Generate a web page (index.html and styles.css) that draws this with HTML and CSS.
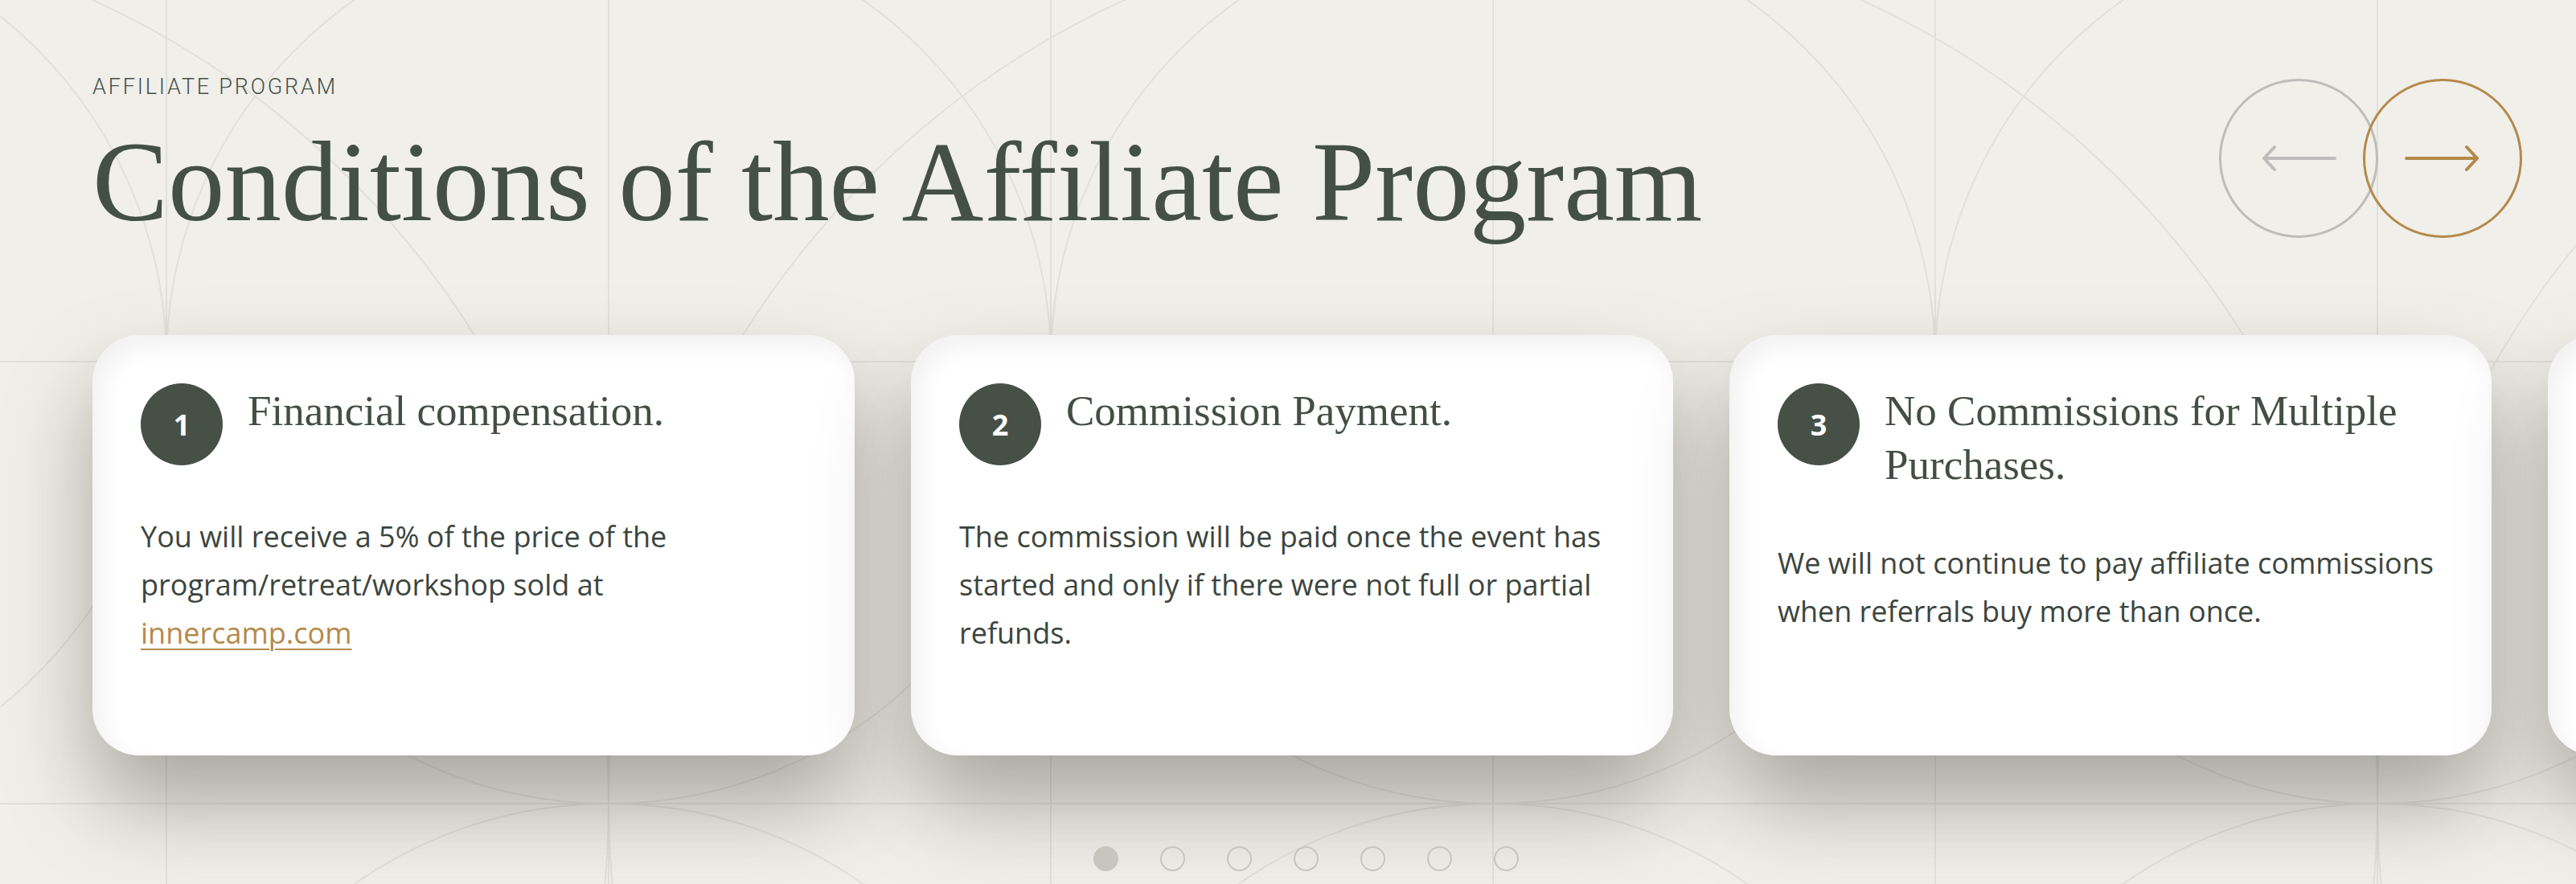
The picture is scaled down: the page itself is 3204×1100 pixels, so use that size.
FILE: index.html
```html
<!DOCTYPE html>
<html lang="en">
<head>
<meta charset="utf-8">
<title>Conditions of the Affiliate Program</title>
<link rel="stylesheet" href="styles.css">
</head>
<body>
<div class="page">
  <svg class="bg" width="3204" height="1100" viewBox="0 0 3204 1100" aria-hidden="true">
    <g class="bg-lines">
      <line x1="207" y1="0" x2="207" y2="1100"/>
      <line x1="757" y1="0" x2="757" y2="1100"/>
      <line x1="1307" y1="0" x2="1307" y2="1100"/>
      <line x1="1857" y1="0" x2="1857" y2="1100"/>
      <line x1="2407" y1="0" x2="2407" y2="1100"/>
      <line x1="2957" y1="0" x2="2957" y2="1100"/>
      <line x1="0" y1="450" x2="3204" y2="450"/>
      <line x1="0" y1="1000" x2="3204" y2="1000"/>
      <circle cx="-343" cy="450" r="550"/>
      <circle cx="757" cy="450" r="550"/>
      <circle cx="1857" cy="450" r="550"/>
      <circle cx="2957" cy="450" r="550"/>
      <circle cx="-343" cy="1550" r="550"/>
      <circle cx="757" cy="1550" r="550"/>
      <circle cx="1857" cy="1550" r="550"/>
      <circle cx="2957" cy="1550" r="550"/>
      <circle cx="-343" cy="1000" r="1100"/>
      <circle cx="1857" cy="1000" r="1100"/>
      <circle cx="4057" cy="1000" r="1100"/>
    </g>
  </svg>

  <header class="top">
    <div class="titles">
      <p class="eyebrow">AFFILIATE PROGRAM</p>
      <h1 class="heading">Conditions of the Affiliate Program</h1>
    </div>
    <div class="nav">
      <button class="nav-btn prev" aria-label="Previous">
        <svg width="96" height="36" viewBox="0 0 96 36"><path d="M93 18H5M18 4L5 18L18 32"/></svg>
      </button>
      <button class="nav-btn next" aria-label="Next">
        <svg width="96" height="36" viewBox="0 0 96 36"><path d="M3 18H91M78 4L91 18L78 32"/></svg>
      </button>
    </div>
  </header>

  <div class="track">
    <article class="card">
      <div class="card-head">
        <span class="num">1</span>
        <h2 class="card-title">Financial compensation.</h2>
      </div>
      <p class="card-text">You will receive a 5% of the price of the program/retreat/workshop sold at <a href="#">innercamp.com</a></p>
    </article>
    <article class="card">
      <div class="card-head">
        <span class="num">2</span>
        <h2 class="card-title">Commission Payment.</h2>
      </div>
      <p class="card-text">The commission will be paid once the event has started and only if there were not full or partial refunds.</p>
    </article>
    <article class="card">
      <div class="card-head">
        <span class="num">3</span>
        <h2 class="card-title">No Commissions for Multiple Purchases.</h2>
      </div>
      <p class="card-text">We will not continue to pay affiliate commissions when referrals buy more than once.</p>
    </article>
    <article class="card" aria-hidden="true"></article>
  </div>

  <div class="dots">
    <span class="dot active"></span>
    <span class="dot"></span>
    <span class="dot"></span>
    <span class="dot"></span>
    <span class="dot"></span>
    <span class="dot"></span>
    <span class="dot"></span>
  </div>
</div>
</body>
</html>
```

FILE: styles.css
```css
html, body {
  margin: 0;
  padding: 0;
}

body {
  background: #f0efea;
  overflow: hidden;
}

.page {
  position: relative;
  width: 3204px;
  height: 1100px;
  overflow: hidden;
  background: #f0efea;
}

.bg {
  position: absolute;
  left: 0;
  top: 0;
  z-index: 0;
}

.bg-lines line,
.bg-lines circle {
  fill: none;
  stroke: #e1e0db;
  stroke-width: 2;
}

.top,
.track,
.dots {
  position: relative;
  z-index: 1;
}

.top {
  display: flex;
  justify-content: space-between;
  align-items: flex-start;
  padding: 92px 67px 0 115px;
}

.eyebrow {
  margin: 0;
  font-family: "Roboto", sans-serif;
  font-weight: 300;
  font-size: 27px;
  line-height: 32px;
  letter-spacing: 2.8px;
  color: #465047;
}

.heading {
  margin: 32px 0 0;
  font-family: "Liberation Serif", serif;
  font-weight: 400;
  font-size: 141px;
  line-height: 140px;
  color: #445046;
  white-space: nowrap;
}

.nav {
  display: flex;
  margin-top: 6px;
}

.nav-btn {
  box-sizing: border-box;
  width: 198px;
  height: 198px;
  padding: 0;
  border-radius: 50%;
  border: 3px solid #bdbdbb;
  background: transparent;
  display: flex;
  align-items: center;
  justify-content: center;
}

.nav-btn svg path {
  fill: none;
  stroke-width: 4;
  stroke-linecap: round;
  stroke-linejoin: round;
}

.prev svg path {
  stroke: #bcbcba;
}

.next {
  margin-left: -19px;
  border-color: #b5894a;
}

.next svg path {
  stroke: #b5894a;
}

.track {
  display: flex;
  gap: 70px;
  padding-left: 115px;
  margin-top: 121px;
}

.card {
  flex: 0 0 948px;
  height: 523px;
  box-sizing: border-box;
  padding: 60px 60px 40px;
  background: #ffffff;
  border-radius: 58px;
  box-shadow: inset 12px 14px 28px rgba(0, 0, 0, 0.055),
              0 60px 110px rgba(60, 58, 48, 0.4);
}

.card-head {
  display: flex;
  align-items: flex-start;
}

.num {
  flex: 0 0 102px;
  height: 102px;
  margin: 0 31px 0 0;
  border-radius: 50%;
  background: #465047;
  color: #ffffff;
  font-family: "Open Sans", sans-serif;
  font-weight: 700;
  font-size: 36px;
  display: flex;
  align-items: center;
  justify-content: center;
}

.card-title {
  margin: 1px 0 0;
  font-family: "Liberation Serif", serif;
  font-weight: 400;
  font-size: 53px;
  line-height: 67px;
  color: #434e44;
}

.card-text {
  margin: 59px 0 0;
  font-family: "Open Sans", sans-serif;
  font-weight: 400;
  font-size: 36px;
  line-height: 60px;
  color: #3c453d;
}

.card-text a {
  color: #b5894a;
  text-decoration: underline;
  text-underline-offset: 6px;
  text-decoration-thickness: 2px;
}

.dots {
  display: flex;
  justify-content: center;
  gap: 52px;
  padding-left: 44px;
  margin-top: 113px;
}

.dot {
  width: 31px;
  height: 31px;
  box-sizing: border-box;
  border-radius: 50%;
  border: 2px solid #c7c5be;
}

.dot.active {
  background: #c7c5be;
}
```
